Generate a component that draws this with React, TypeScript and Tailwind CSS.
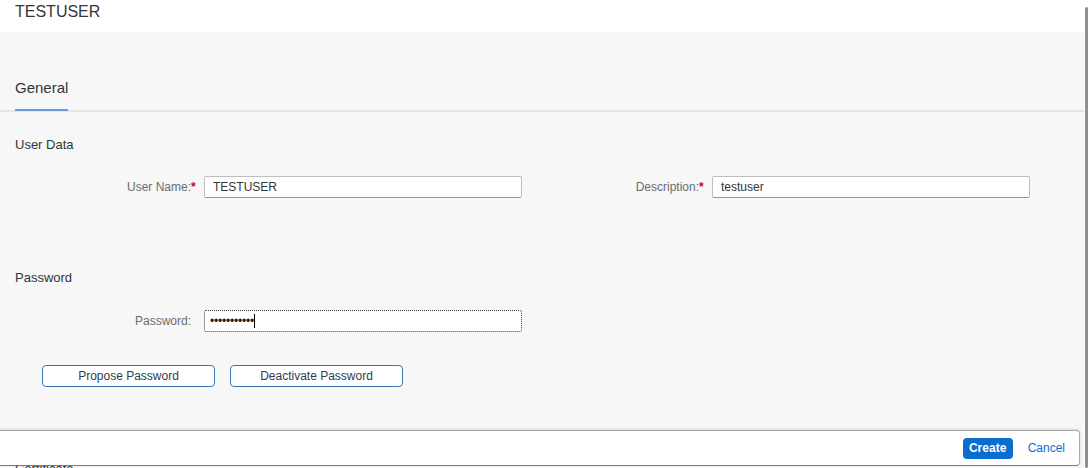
export default function App() {
  return (
    <div className="flex h-[468px] w-full overflow-hidden bg-white font-['Liberation_Sans',Arial,sans-serif]">
      <div className="relative flex-1 overflow-hidden bg-[#f7f7f7]">
        {/* Title */}
        <div className="h-8 bg-white pl-[15px] pt-[2px] text-[16px] leading-[20px] text-[#32363a]">
          TESTUSER
        </div>

        {/* Tabs */}
        <div className="border-b-2 border-[#e5e5e5] px-[15px] pt-[44px]">
          <div className="-mb-px inline-block border-b-2 border-[#6b9bd6] pb-[11px] text-[15px] leading-[20px] text-[#32363a]">
            General
          </div>
        </div>

        <div className="px-[15px]">
          {/* User Data */}
          <div className="mt-[25px] text-[13px] leading-4 text-[#32363a]">User Data</div>
          <div className="mt-[23px] grid w-[1016px] grid-cols-2">
            <Field label="User Name:" required value="TESTUSER" />
            <Field label="Description:" required value="testuser" />
          </div>

          {/* Password */}
          <div className="mt-[72px] text-[13px] leading-4 text-[#32363a]">Password</div>
          <div className="mt-[24px] flex items-center">
            <Label text="Password:" />
            <div className="ml-[7px] flex h-[22px] w-[318px] items-center rounded-[2px] border border-dotted border-[#3a3a3a] bg-white pl-[5px]">
              <span className="text-[12px] leading-[14px] tracking-[-0.2px] text-[#222]">•••••••••••</span>
              <span className="inline-block h-[14px] w-px bg-black" />
            </div>
          </div>

          <div className="mt-[33px] flex gap-[15px] pl-[27px]">
            <button className="h-[22px] w-[173px] rounded-[4px] border border-[#3d74b3] bg-white text-[12px] text-[#2f3c4e]">
              Propose Password
            </button>
            <button className="h-[22px] w-[173px] rounded-[4px] border border-[#3d74b3] bg-white text-[12px] text-[#2f3c4e]">
              Deactivate Password
            </button>
          </div>

          <div className="mt-[74px] text-[13px] leading-4 text-[#32363a]">Certificate</div>
        </div>

        {/* Footer toolbar */}
        <div className="absolute left-[-1px] right-[4px] top-[430px] flex h-[36px] items-center justify-end gap-[15px] rounded-r-[4px] border border-[#a8a8a8] border-b-[#7a7a7a] bg-white pr-[14px] shadow-[0_-1px_3px_rgba(0,0,0,0.12)]">
          <button className="h-[21px] w-[50px] rounded-[4px] bg-[#0a6ed1] text-[12px] font-bold text-white">
            Create
          </button>
          <button className="text-[12px] text-[#0a6ed1]">Cancel</button>
        </div>
      </div>

      {/* Scrollbar */}
      <div className="w-[5px] bg-white pl-px pt-[7px]">
        <div className="h-full w-[3px] rounded-sm bg-[#8f8f8f]" />
      </div>
    </div>
  );
}

function Label({ text, required }: { text: string; required?: boolean }) {
  return (
    <div className="flex w-[182px] justify-end text-[12px] leading-4 text-[#6a6d70]">
      <span>{text}</span>
      <span className="w-[6px] font-bold text-[#d0021b]">{required ? "*" : ""}</span>
    </div>
  );
}

function Field({ label, required, value }: { label: string; required?: boolean; value: string }) {
  return (
    <div className="flex items-center">
      <Label text={label} required={required} />
      <div className="ml-[7px] flex h-[22px] w-[318px] items-center rounded-[2px] border border-[#bfbfbf] border-b-[#949494] bg-white pl-[8px] text-[12px] text-[#32363a]">
        {value}
      </div>
    </div>
  );
}
